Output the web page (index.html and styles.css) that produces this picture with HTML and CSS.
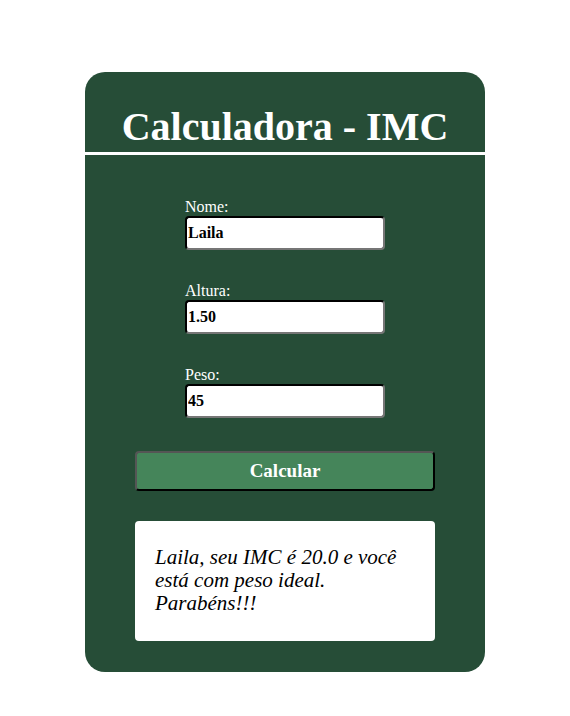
FILE: index.html
```html
<!DOCTYPE html>
<html lang="pt-BR">
<head>
<meta charset="utf-8">
<title>Calculadora - IMC</title>
<link rel="stylesheet" href="styles.css">
</head>
<body>
<main class="card">
  <header class="card-header">
    <h1 class="title">Calculadora - IMC</h1>
  </header>
  <form class="form">
    <div class="field">
      <label class="label" for="nome">Nome:</label>
      <input class="input" id="nome" type="text" value="Laila">
    </div>
    <div class="field">
      <label class="label" for="altura">Altura:</label>
      <input class="input" id="altura" type="text" value="1.50">
    </div>
    <div class="field">
      <label class="label" for="peso">Peso:</label>
      <input class="input" id="peso" type="text" value="45">
    </div>
    <button class="btn" type="button">Calcular</button>
  </form>
  <div class="result">
    <p class="result-text">Laila, seu IMC é 20.0 e você está com peso ideal. Parabéns!!!</p>
  </div>
</main>
</body>
</html>
```

FILE: styles.css
```css
* { box-sizing: border-box; }
html, body { margin: 0; padding: 0; background: #ffffff; }
body {
  font-family: "Liberation Serif", "Times New Roman", serif;
  display: flex;
  justify-content: center;
  padding-top: 72px;
}
.card {
  width: 400px;
  height: 600px;
  background: #264d37;
  border-radius: 20px;
  display: flex;
  flex-direction: column;
  align-items: center;
}
.card-header {
  width: 100%;
  height: 83px;
  border-bottom: 3px solid #ffffff;
  display: flex;
  align-items: center;
  justify-content: center;
  padding-top: 29px;
}
.title {
  margin: 0;
  color: #ffffff;
  font-size: 40px;
  line-height: 46px;
  font-weight: bold;
}
.form {
  display: flex;
  flex-direction: column;
  align-items: center;
  margin-top: 43px;
}
.field {
  display: flex;
  flex-direction: column;
  width: 200px;
  margin-bottom: 32px;
}
.label {
  color: #ffffff;
  font-size: 16px;
  line-height: 18px;
}
.input {
  width: 200px;
  height: 34px;
  border: 2px inset #767676;
  border-top-color: #333;
  border-left-color: #333;
  border-radius: 4px;
  background: #ffffff;
  font-family: "Liberation Serif", "Times New Roman", serif;
  font-weight: bold;
  font-size: 16px;
  color: #000;
  padding: 0 1px;
}
.btn {
  width: 300px;
  height: 40px;
  background: #45855a;
  border: 2px outset #555;
  border-right-color: #111;
  border-bottom-color: #111;
  border-radius: 4px;
  color: #ffffff;
  font-family: "Liberation Serif", "Times New Roman", serif;
  font-weight: bold;
  font-size: 19px;
  margin-top: 1px;
}
.result {
  width: 300px;
  margin-top: 30px;
  background: #ffffff;
  border-radius: 4px;
  padding: 25px 20px 26px;
}
.result-text {
  margin: 0;
  font-style: italic;
  font-size: 21px;
  line-height: 23px;
  color: #000;
}
```
